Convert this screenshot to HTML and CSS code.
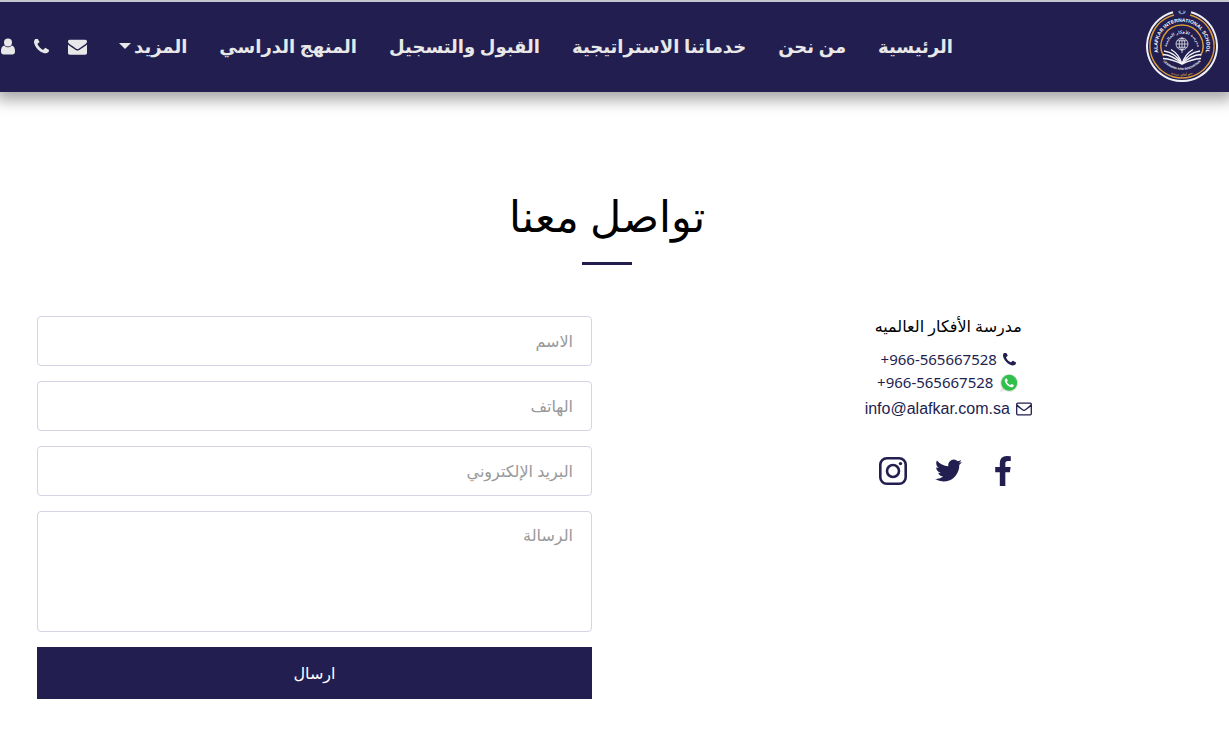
FILE: index.html
```html
<!DOCTYPE html>
<html lang="ar" dir="rtl">
<head>
  <meta charset="UTF-8">
  <meta name="viewport" content="width=device-width, initial-scale=1.0">
  <title>تواصل معنا</title>
  <link rel="stylesheet" href="styles.css">
</head>
<body>
  <header class="site-header">
    <a class="logo" href="#" aria-label="Alafkar International School">
      <svg viewBox="0 0 72 72" width="72" height="72">
        <defs>
          <path id="ring-top" d="M14.200 47.500 A24.500 24.500 0 1 1 57.800 47.500"/>
          <path id="ring-inner" d="M20.500 39 A15.500 15.500 0 1 1 51.500 39"/>
          <path id="ring-bottom" d="M15 48.500 A25 25 0 0 0 57 48.500"/>
          <path id="ring-base" d="M14 56 A29.500 29.500 0 0 0 58 56"/>
        </defs>
        <path d="M45 2.200 A35 35 0 1 1 27 2.200" fill="none" stroke="#f0eff5" stroke-width="2"/>
        <path d="M44 5 A32 32 0 1 1 28 5" fill="none" stroke="#d99a3c" stroke-width="1.600"/>
        <path d="M17.500 46 A21 21 0 1 1 54.500 46" fill="none" stroke="#d99a3c" stroke-width="1.500"/>
        <path d="M32 1.500 L36 4 L40 1.500 M34 0.500 V4 M38 0.500 V4" fill="none" stroke="#7fa3cf" stroke-width="1"/>
        <text class="logo-name"><textPath href="#ring-top" startOffset="50%">ALAFKAR INTERNATIONAL SCHOOL</textPath></text>
        <text class="logo-small"><textPath href="#ring-inner" startOffset="50%">مدرسة الأفكار العالمية</textPath></text>
        <g fill="none" stroke="#e8e8ef" stroke-width="0.800">
          <circle cx="36" cy="34" r="6"/>
          <ellipse cx="36" cy="34" rx="2.800" ry="6"/>
          <path d="M36 28 V43 M30 34 H42 M31.200 30.800 H40.800 M31.200 37.200 H40.800"/>
        </g>
        <g fill="none" stroke="#f4f4f8" stroke-width="1.400">
          <path d="M36 54 C32 47 26 42 18 41"/>
          <path d="M36 54 C31 49 25 45 17 44.500"/>
          <path d="M36 54 C30 51 24 49 17 48.500"/>
          <path d="M36 54 C34 47 31 43 25 39.500"/>
          <path d="M36 54 C40 47 46 42 54 41"/>
          <path d="M36 54 C41 49 47 45 55 44.500"/>
          <path d="M36 54 C42 51 48 49 55 48.500"/>
          <path d="M36 54 C38 47 41 43 47 39.500"/>
        </g>
        <text class="logo-tiny"><textPath href="#ring-bottom" startOffset="50%">LEARNING AND INNOVATION</textPath></text>
        <text class="logo-tiny gold"><textPath href="#ring-base" startOffset="50%">نحو آفاق جديدة</textPath></text>
      </svg>
    </a>
    <nav class="main-nav">
      <a href="#">الرئيسية</a>
      <a href="#">من نحن</a>
      <a href="#">خدماتنا الاستراتيجية</a>
      <a href="#">القبول والتسجيل</a>
      <a href="#">المنهج الدراسي</a>
      <a class="more" href="#">المزيد <span class="caret"></span></a>
    </nav>
    <div class="header-icons">
      <a href="#" aria-label="البريد">
        <svg viewBox="0 0 1792 1792" width="19" height="19"><path d="M1792 710v794q0 66-47 113t-113 47h-1472q-66 0-113-47t-47-113v-794q44 49 101 87 362 246 497 345 57 42 92.500 65.500t94.500 48 110 24.500h2q51 0 110-24.500t94.500-48 92.500-65.500q170-123 498-345 57-39 100-87zm0-294q0 79-49 151t-122 123q-376 261-468 325-10 7-42.500 30.500t-54 38-52 32.500-57.500 27-50 9h-2q-23 0-50-9t-57.500-27-52-32.500-54-38-42.500-30.500q-91-64-262-182.500t-205-142.500q-62-42-117-115.500t-55-136.500q0-78 41.500-130t118.500-52h1472q65 0 112.500 47t47.500 113z"/></svg>
      </a>
      <a href="#" aria-label="الهاتف">
        <svg viewBox="192 192 1408 1408" width="15" height="15"><path d="M1600 1240q0 27-10 70.500t-21 68.500q-21 50-122 106-94 51-186 51-27 0-53-3.500t-57.500-12.500-47-14.500-55.500-20.500-49-18q-98-35-175-83-127-79-264-216t-216-264q-48-77-83-175-3-9-18-49t-20.500-55.500-14.500-47-12.500-57.500-3.500-53q0-92 51-186 56-101 106-122 25-11 68.500-21t70.500-10q14 0 21 3 18 6 53 76 11 19 30 54t35 63.500 31 53.500q3 4 17.500 25t21.500 35.500 7 28.500q0 20-28.500 50t-62 55-62 53-28.500 46q0 9 5 22.500t8.500 20.500 14 24 11.500 19q76 137 174 235t235 174q2 1 19 11.500t24 14 20.500 8.500 22.500 5q18 0 46-28.500t53-62 55-62 50-28.500q14 0 28.500 7t35.500 21.500 25 17.500q25 15 53.500 31t63.500 35 54 30q70 35 76 53 3 7 3 21z"/></svg>
      </a>
      <a href="#" aria-label="الحساب">
        <svg viewBox="0 0 14 17" width="14" height="17"><circle cx="7" cy="4.500" r="4"/><path d="M3.200 7.500 C4.200 8.700 5.500 9.300 7 9.300 S9.800 8.700 10.800 7.500 C13.200 8 14 10.500 14 13.500 C14 15.500 12.900 16.500 11.300 16.500 H2.700 C1.100 16.500 0 15.500 0 13.500 C0 10.500 0.800 8 3.200 7.500Z"/></svg>
      </a>
    </div>
  </header>

  <main class="contact">
    <h1>تواصل معنا</h1>
    <div class="columns">
      <section class="info">
        <p class="school">مدرسة الأفكار العالميه</p>
        <a class="info-line" href="tel:+966565667528">
          <svg viewBox="192 192 1408 1408" width="13" height="13"><path d="M1600 1240q0 27-10 70.500t-21 68.500q-21 50-122 106-94 51-186 51-27 0-53-3.500t-57.500-12.500-47-14.500-55.500-20.500-49-18q-98-35-175-83-127-79-264-216t-216-264q-48-77-83-175-3-9-18-49t-20.500-55.500-14.500-47-12.500-57.500-3.500-53q0-92 51-186 56-101 106-122 25-11 68.500-21t70.500-10q14 0 21 3 18 6 53 76 11 19 30 54t35 63.500 31 53.500q3 4 17.500 25t21.500 35.500 7 28.500q0 20-28.500 50t-62 55-62 53-28.500 46q0 9 5 22.500t8.500 20.500 14 24 11.500 19q76 137 174 235t235 174q2 1 19 11.500t24 14 20.500 8.500 22.500 5q18 0 46-28.500t53-62 55-62 50-28.500q14 0 28.500 7t35.500 21.500 25 17.500q25 15 53.500 31t63.500 35 54 30q70 35 76 53 3 7 3 21z"/></svg>
          <bdi dir="ltr">+966-565667528</bdi>
        </a>
        <a class="info-line" href="#">
          <svg viewBox="0 0 20 20" width="20" height="20"><path d="M1 19 L2.300 14.500 A9 9 0 1 1 5.600 17.800Z" fill="#e4e8e4"/><circle cx="10.200" cy="9.800" r="8" fill="#2fbf4b"/><path d="M7.300 5.200 C6.200 5.500 5.500 6.700 5.800 8.100 C6.500 11 9 13.500 12 14.300 C13.400 14.600 14.700 13.800 14.900 12.500 C14.900 12 13.200 11.100 12.600 11 C12.100 11 11.600 12.200 11.200 12.100 C9.800 11.600 8.600 10.500 7.900 9.100 C7.800 8.700 8.800 8.100 8.800 7.600 C8.700 7 8 5.300 7.300 5.200Z" fill="#fff"/></svg>
          <bdi dir="ltr">+966-565667528</bdi>
        </a>
        <a class="info-line email" href="mailto:info@alafkar.com.sa">
          <svg viewBox="0 0 16 14" width="16" height="14"><path d="M1.700 1.200 H14.300 Q15.300 1.200 15.300 2.200 V11.800 Q15.300 12.800 14.300 12.800 H1.700 Q0.700 12.800 0.700 11.800 V2.200 Q0.700 1.200 1.700 1.200Z M0.900 3 C2.500 4.800 4.500 6.200 6.500 7.800 Q8 9 9.500 7.800 C11.500 6.200 13.500 4.800 15.100 3" fill="none" stroke="currentColor" stroke-width="1.300"/></svg>
          <bdi dir="ltr">info@alafkar.com.sa</bdi>
        </a>
        <div class="social">
          <a href="#" aria-label="Facebook">
            <svg viewBox="479 0 864 1664" width="16" height="30"><path d="M1343 12v264h-157q-86 0-116 36t-30 108v189h293l-39 296h-254v759h-306v-759h-255v-296h255v-218q0-186 104-288.500t277-102.500q147 0 228 12z"/></svg>
          </a>
          <a href="#" aria-label="Twitter">
            <svg viewBox="44 256 1640 1344" width="28" height="24"><path d="M1684 408q-67 98-162 167 1 14 1 42 0 130-38 259.500t-115.500 248.500-184.500 210.500-258 146-323 54.500q-271 0-496-145 35 4 78 4 225 0 401-138-105-2-188-64.500t-114-159.500q33 5 61 5 43 0 85-11-112-23-185.500-111.500t-73.500-205.500v-4q68 38 146 41-66-44-105-115t-39-154q0-88 44-163 121 149 294.500 238.500t371.500 99.500q-8-38-8-74 0-134 94.500-228.500t228.500-94.500q140 0 236 102 109-21 205-78-37 115-142 178 93-10 186-50z"/></svg>
          </a>
          <a href="#" aria-label="Instagram">
            <svg viewBox="0 0 28 28" width="28" height="28"><rect x="1.300" y="1.300" width="25.400" height="25.400" rx="6.500" fill="none" stroke="currentColor" stroke-width="2.600"/><circle cx="14" cy="14" r="6" fill="none" stroke="currentColor" stroke-width="2.600"/><circle cx="21.500" cy="6.600" r="1.700"/></svg>
          </a>
        </div>
      </section>

      <form class="contact-form">
        <input type="text" placeholder="الاسم" aria-label="الاسم">
        <input type="tel" dir="rtl" placeholder="الهاتف" aria-label="الهاتف">
        <input type="email" placeholder="البريد الإلكتروني" aria-label="البريد الإلكتروني">
        <textarea placeholder="الرسالة" aria-label="الرسالة"></textarea>
        <button type="button">ارسال</button>
      </form>
    </div>
  </main>
</body>
</html>
```
FILE: styles.css
```css
* {
  box-sizing: border-box;
}
body {
  margin: 0;
  background: #fff;
  color: #000;
  font-family: "Noto Sans", "DejaVu Sans", sans-serif;
  font-size: 16px;
}
a {
  color: #221e4f;
  text-decoration: none;
}
svg {
  display: block;
  fill: currentColor;
}
.site-header {
  display: flex;
  align-items: center;
  height: 92px;
  padding: 0 11px 2px 1px;
  background: #221e4f;
  border-top: 2px solid #c4c6cf;
  box-shadow: 0 4px 14px 4px rgba(0, 0, 0, 0.35);
}
.site-header a {
  color: #e8e8e8;
}
.logo-name {
  font: bold 5px "Liberation Sans", sans-serif;
  fill: #fff;
  text-anchor: middle;
}
.logo-small {
  font: bold 4px "DejaVu Sans", sans-serif;
  fill: #dcdce6;
  text-anchor: middle;
}
.logo-tiny {
  font: bold 3px "Liberation Sans", "DejaVu Sans", sans-serif;
  fill: #fff;
  text-anchor: middle;
}
.logo-tiny.gold {
  fill: #d99a3c;
}
.main-nav {
  display: flex;
  gap: 32px;
  margin-right: auto;
  font-size: 18px;
  font-weight: bold;
  white-space: nowrap;
}
.more {
  display: flex;
  align-items: center;
  gap: 3px;
}
.caret {
  border: 6px solid transparent;
  border-top-color: #e8e8e8;
  border-bottom: 0;
}
.header-icons {
  display: flex;
  align-items: center;
  gap: 19px;
  margin-right: 32px;
}
.contact {
  max-width: 1185px;
  margin: 0 auto;
  padding: 94px 15px 34px 0;
}
h1 {
  display: flex;
  flex-direction: column;
  align-items: center;
  margin: 0 0 50px;
  font-size: 43px;
  font-weight: normal;
  line-height: 60px;
}
h1::after {
  content: "";
  width: 50px;
  height: 3px;
  margin-top: 16px;
  background: #221e4f;
}
.columns {
  display: grid;
  grid-template-columns: 5fr 1fr 6fr;
}
.info {
  display: flex;
  flex-direction: column;
  align-items: center;
}
.school {
  margin: 0 0 10px;
  line-height: 23px;
}
.info-line {
  display: flex;
  align-items: center;
  gap: 6px;
  font-size: 15px;
  line-height: 23px;
}
.email {
  margin-top: 3px;
  font-family: "Liberation Sans", sans-serif;
  font-size: 16px;
}
.social {
  display: flex;
  align-items: center;
  gap: 27px;
  margin-top: 36px;
}
.social a {
  display: flex;
  justify-content: center;
  width: 28px;
}
.contact-form {
  display: flex;
  flex-direction: column;
  grid-column: 3;
  gap: 15px;
  padding: 1px 15px 0;
}
.contact-form input,
.contact-form textarea {
  height: 50px;
  padding: 12px 18px;
  border: 1px solid #d3d4e4;
  border-radius: 4px;
  background: #fff;
  font-family: inherit;
  font-size: 16px;
}
.contact-form textarea {
  height: 121px;
  resize: none;
}
.contact-form ::placeholder {
  color: #999;
}
.contact-form button {
  height: 52px;
  border: 0;
  background: #221e4f;
  color: #fff;
  font-family: inherit;
  font-size: 16px;
  font-weight: 500;
}
```
